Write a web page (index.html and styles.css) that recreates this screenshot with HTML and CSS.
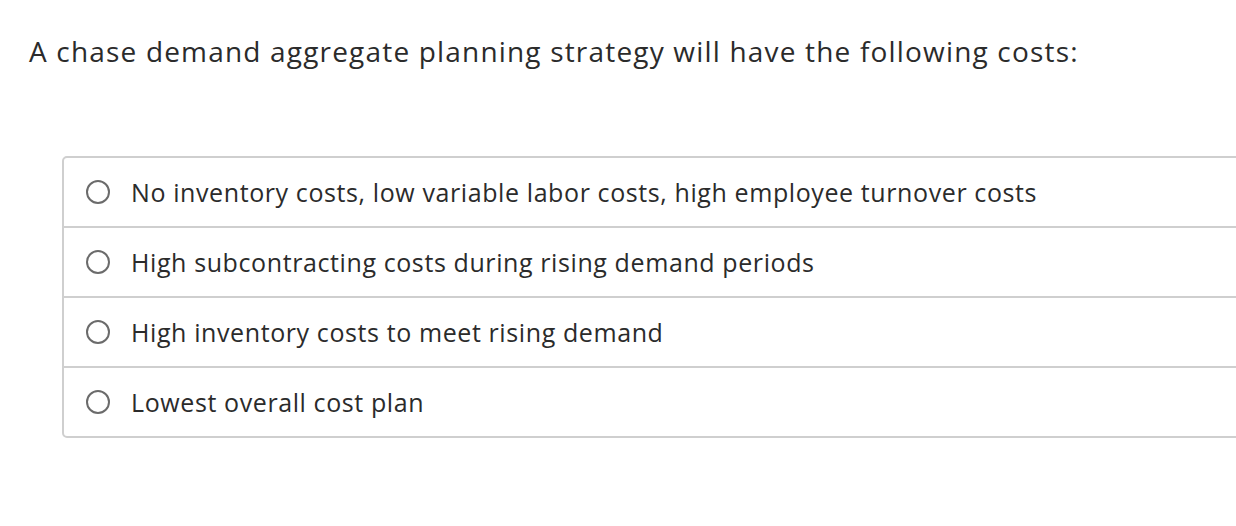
FILE: index.html
```html
<!DOCTYPE html>
<html>
<head>
<meta charset="utf-8">
<link rel="stylesheet" href="styles.css">
</head>
<body>
<div class="page">
  <h1 class="question">A chase demand aggregate planning strategy will have the following costs:</h1>
  <div class="choices">
    <label class="choice"><span class="radio"></span><span class="text">No inventory costs, low variable labor costs, high employee turnover costs</span></label>
    <label class="choice"><span class="radio"></span><span class="text">High subcontracting costs during rising demand periods</span></label>
    <label class="choice"><span class="radio"></span><span class="text">High inventory costs to meet rising demand</span></label>
    <label class="choice"><span class="radio"></span><span class="text">Lowest overall cost plan</span></label>
  </div>
</div>
</body>
</html>
```
FILE: styles.css
```css
html, body {
  margin: 0;
  padding: 0;
  background: #fff;
  overflow: hidden;
}
body {
  width: 1236px;
  height: 526px;
  font-family: "Open Sans", "Liberation Sans", sans-serif;
  color: #2b2b2b;
}
.page {
  padding: 0 0 0 29px;
}
.question {
  margin: 0;
  padding-top: 32px;
  font-size: 28px;
  font-weight: 400;
  line-height: 38px;
  letter-spacing: 1.18px;
}
.choices {
  margin: 86px 0 0 33px;
  width: 1200px;
  border: 2px solid #cfcfcf;
  border-radius: 5px;
}
.choice {
  display: flex;
  align-items: center;
  height: 68px;
  padding-left: 22px;
  border-top: 2px solid #cfcfcf;
  font-size: 25px;
  letter-spacing: 0.6px;
}
.choice:first-child {
  border-top: none;
}
.radio {
  width: 20px;
  height: 20px;
  border: 2px solid #6b6b6b;
  border-radius: 50%;
  flex: none;
  margin-right: 21px;
}
```
